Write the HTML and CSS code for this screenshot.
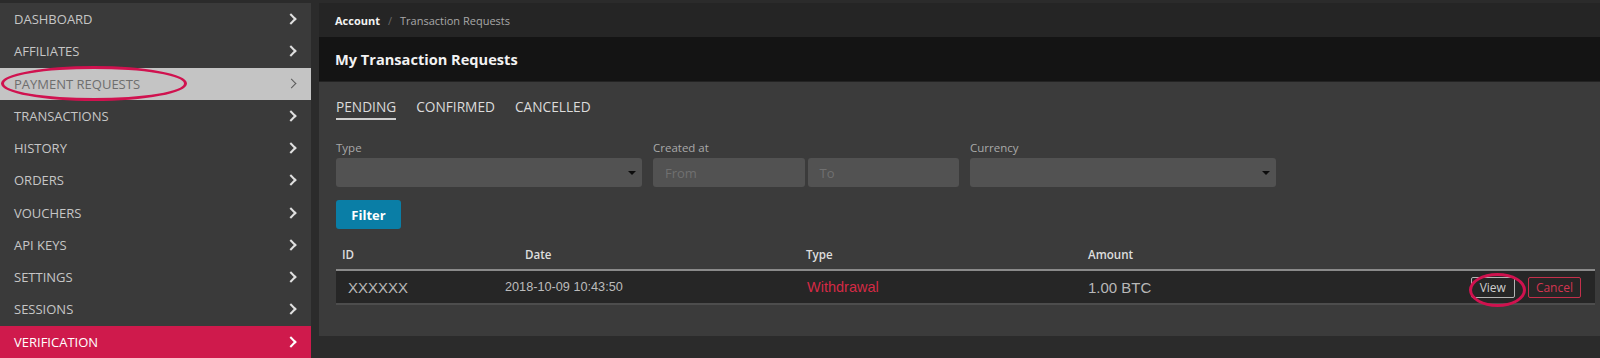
FILE: index.html
```html
<!DOCTYPE html>
<html lang="en">

<head>
    <meta charset="UTF-8">
    <title>My Transaction Requests</title>
    <link rel="stylesheet" href="styles.css">
</head>

<body>
    <div class="sidebar">
        <a class="nav-item" href="#">DASHBOARD<span class="chev"></span></a>
        <a class="nav-item" href="#">AFFILIATES<span class="chev"></span></a>
        <a class="nav-item hover" href="#">PAYMENT REQUESTS<span class="chev"></span></a>
        <a class="nav-item" href="#">TRANSACTIONS<span class="chev"></span></a>
        <a class="nav-item" href="#">HISTORY<span class="chev"></span></a>
        <a class="nav-item" href="#">ORDERS<span class="chev"></span></a>
        <a class="nav-item" href="#">VOUCHERS<span class="chev"></span></a>
        <a class="nav-item" href="#">API KEYS<span class="chev"></span></a>
        <a class="nav-item" href="#">SETTINGS<span class="chev"></span></a>
        <a class="nav-item" href="#">SESSIONS<span class="chev"></span></a>
        <a class="nav-item active" href="#">VERIFICATION<span class="chev"></span></a>
    </div>

    <div class="main">
        <div class="breadcrumb">
            <b>Account</b>
            <span class="sep">/</span>
            <span class="crumb">Transaction Requests</span>
        </div>
        <div class="page-title">My Transaction Requests</div>

        <div class="panel">
            <div class="tabs">
                <span class="tab current">PENDING</span>
                <span class="tab">CONFIRMED</span>
                <span class="tab">CANCELLED</span>
            </div>

            <div class="filters">
                <div class="field">
                    <label>Type</label>
                    <div class="select"><span class="caret"></span></div>
                </div>
                <div class="field">
                    <label>Created at</label>
                    <div class="range">
                        <div class="input">From</div>
                        <div class="input">To</div>
                    </div>
                </div>
                <div class="field">
                    <label>Currency</label>
                    <div class="select"><span class="caret"></span></div>
                </div>
            </div>

            <button class="btn-filter">Filter</button>

            <div class="table">
                <div class="thead">
                    <div class="c-id">ID</div>
                    <div class="c-date">Date</div>
                    <div class="c-type">Type</div>
                    <div class="c-amount">Amount</div>
                    <div></div>
                </div>
                <div class="trow">
                    <div class="c-id">XXXXXX</div>
                    <div class="c-date date">2018-10-09 10:43:50</div>
                    <div class="c-type withdrawal">Withdrawal</div>
                    <div class="c-amount">1.00 BTC</div>
                    <div class="actions">
                        <button class="btn-small">View</button>
                        <button class="btn-small cancel">Cancel</button>
                    </div>
                </div>
            </div>
        </div>
    </div>

    <!-- hand drawn marks on the screenshot -->
    <span class="mark mark-menu"></span>
    <span class="mark mark-view"></span>
</body>

</html>
```

FILE: styles.css
```css
body {
    margin: 0;
    padding: 3px 0 0 0;
    height: 358px;
    box-sizing: border-box;
    overflow: hidden;
    position: relative;
    display: flex;
    gap: 8px;
    background-color: #2b2b2b;
    font-family: "Open Sans", sans-serif;
}

.sidebar {
    width: 311px;
    flex-shrink: 0;
    background-color: #3a3a3a;
}

.nav-item {
    display: flex;
    align-items: center;
    justify-content: space-between;
    height: 32.25px;
    padding: 0 12px 0 14px;
    font-size: 13px;
    color: #c6c6c6;
    text-decoration: none;
}

.chev {
    width: 6px;
    height: 6px;
    border-right: 2px solid #e0e0e0;
    border-top: 2px solid #e0e0e0;
    transform: rotate(45deg);
    margin-right: 4px;
}

.nav-item.hover {
    background-color: #c4c4c4;
    color: #6e6e6e;
}

.nav-item.hover .chev {
    border-color: #5a5a5a;
    border-width: 1.5px;
}

.nav-item.active {
    background-color: #cf1a4c;
    color: #fff;
}

.nav-item.active .chev {
    border-color: #fff;
}

.main {
    flex: 1;
    display: flex;
    flex-direction: column;
}

.breadcrumb {
    height: 34px;
    display: flex;
    align-items: center;
    gap: 8px;
    padding-left: 16px;
    background-color: #252525;
    font-size: 11px;
}

.breadcrumb b {
    color: #f2f2f2;
}

.breadcrumb .sep {
    color: #6a6a6a;
}

.breadcrumb .crumb {
    color: #a8a8a8;
}

.page-title {
    height: 44px;
    display: flex;
    align-items: center;
    padding-left: 16px;
    background-color: #141414;
    border-bottom: 1px solid #232323;
    font-size: 14.6px;
    font-weight: bold;
    color: #f2f2f2;
}

.panel {
    height: 254px;
    padding: 15px 5px 0 17px;
    box-sizing: border-box;
    background-color: #3b3b3b;
}

.tabs {
    display: flex;
    gap: 20px;
}

.tab {
    font-size: 13.7px;
    line-height: 19px;
    padding-bottom: 2px;
    color: #dcdcdc;
    border-bottom: 2px solid transparent;
}

.tab.current {
    border-bottom-color: #cfcfcf;
}

.filters {
    display: flex;
    gap: 11px;
    margin-top: 20px;
}

.field {
    width: 306px;
}

.field label {
    display: block;
    font-size: 11.5px;
    line-height: 16px;
    margin-bottom: 2px;
    color: #a9a9a9;
}

.select,
.input {
    height: 29px;
    border-radius: 3px;
    background-color: #525252;
    box-sizing: border-box;
}

.select {
    display: flex;
    align-items: center;
    justify-content: flex-end;
    padding-right: 6px;
}

.caret {
    width: 0;
    height: 0;
    border-left: 4px solid transparent;
    border-right: 4px solid transparent;
    border-top: 4px solid #0c0c0c;
}

.range {
    display: flex;
    gap: 3px;
}

.input {
    flex: 1;
    display: flex;
    align-items: center;
    padding-left: 12px;
    font-size: 13px;
    color: #707070;
}

.btn-filter {
    display: block;
    margin-top: 13px;
    width: 65px;
    height: 29px;
    border: none;
    border-radius: 3px;
    background-color: #0a7ea6;
    color: #fff;
    font-family: "Open Sans", sans-serif;
    font-size: 13px;
    font-weight: bold;
}

.table {
    margin-top: 10px;
}

.thead,
.trow {
    display: grid;
    grid-template-columns: 164px 306px 282px 1fr auto;
    align-items: center;
}

.thead {
    height: 30px;
    border-bottom: 2px solid #8a8a8a;
    font-size: 11.6px;
    font-weight: 600;
    color: #dedede;
}

.thead .c-id {
    padding-left: 6px;
}

.thead .c-date {
    padding-left: 25px;
}

.trow {
    height: 32px;
    background-color: #262626;
    border-bottom: 2px solid #4d4d4d;
    font-family: "Liberation Sans", Arial, sans-serif;
    font-size: 15px;
    color: #b8b8b8;
}

.trow .c-id {
    padding-left: 12px;
}

.trow .c-date {
    padding-left: 5px;
}

.trow .c-type {
    padding-left: 1px;
}

.date {
    font-size: 12.7px;
    color: #bcbcbc;
}

.withdrawal {
    color: #d42a45;
    font-size: 14.5px;
}

.actions {
    display: flex;
    gap: 13px;
    padding-right: 14px;
}

.btn-small {
    height: 21px;
    padding: 0 8px;
    background-color: #262626;
    border: 1px solid #b5b5b5;
    border-radius: 2px;
    color: #cfcfcf;
    font-family: "Open Sans", sans-serif;
    font-size: 12px;
    line-height: 19px;
}

.btn-small.cancel {
    border-color: #c4304b;
    color: #d33550;
    padding: 0 7px;
}

.mark {
    position: absolute;
    border: 3.5px solid #d0124f;
    border-radius: 50%;
    box-sizing: border-box;
}

.mark-menu {
    left: 1px;
    top: 66px;
    width: 186px;
    height: 35px;
}

.mark-view {
    left: 1469px;
    top: 273px;
    width: 57px;
    height: 34px;
}
```
